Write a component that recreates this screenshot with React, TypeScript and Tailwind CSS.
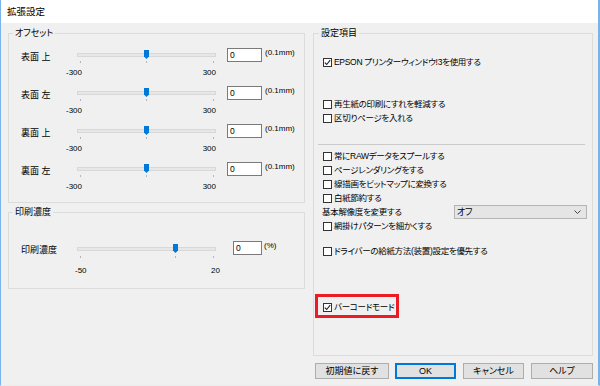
import type { ReactNode } from 'react'

const BOX = 'border border-[#dcdcdc]'

function Legend({ children, cls }: { children: ReactNode; cls: string }) {
  return <div className={`-mt-[7px] px-[2px] w-fit bg-[#f0f0f0] leading-[12px] text-[9px] ${cls}`}>{children}</div>
}

function Thumb({ left }: { left: number }) {
  return (
    <svg className="absolute top-0" style={{ left: left - 2 }} width="5" height="9" viewBox="0 0 5 9">
      <path d="M0 0H5V6.5L2.5 9L0 6.5Z" fill="#0078d7" />
    </svg>
  )
}

type SliderProps = {
  thumb: number
  ticks: number[]
  min: string
  max: string
  top: string
  tickTop: string
  labelRow: string
}

function Slider({ thumb, ticks, min, max, top, tickTop, labelRow }: SliderProps) {
  return (
    <div className="w-[139px] shrink-0">
      <div className={`relative h-[9px] flex items-center ${top}`}>
        <div className="w-full h-[4px] bg-[#e7e7e7] border border-[#d8d8d8]" />
        <Thumb left={thumb} />
      </div>
      <div className={`relative h-[2px] ${tickTop}`}>
        {ticks.map((t) => (
          <span key={t} className="absolute top-0 w-px h-[2px] bg-[#b5b5b5]" style={{ left: t }} />
        ))}
      </div>
      <div className={`flex justify-between text-[8px] leading-[10px] ${labelRow}`}>
        <span>{min}</span>
        <span>{max}</span>
      </div>
    </div>
  )
}

function OffsetRow({ label }: { label: string }) {
  return (
    <div className="h-[38px] flex items-start pl-[12px]">
      <div className="w-[56px] mt-[4px] leading-[12px] text-[9px]">{label}</div>
      <Slider thumb={69} ticks={[3, 69, 136]} min="-300" max="300" top="mt-[3px]" tickTop="mt-[2px]" labelRow="mt-[5px] -ml-[11px]" />
      <div className="ml-[11px] mt-[1px] w-[35px] h-[14px] border border-[#7a7a7a] bg-white pl-[2px] text-[8.5px] leading-[12px]">0</div>
      <div className="ml-[3px] mt-[1px] text-[8px] leading-[10px]">(0.1mm)</div>
    </div>
  )
}

function Box({ checked }: { checked?: boolean }) {
  return (
    <span className="w-[9px] h-[9px] shrink-0 border border-[#333] bg-white flex items-center justify-center">
      {checked && (
        <svg width="7" height="7" viewBox="0 0 7 7">
          <polyline points="0.8,3.6 2.7,5.5 6.2,1.2" fill="none" stroke="#222" strokeWidth="1.1" />
        </svg>
      )}
    </span>
  )
}

function Check({ label, checked, pad = 'pl-[9px]', cls = '' }: { label: string; checked?: boolean; pad?: string; cls?: string }) {
  return (
    <div className={`h-[14px] flex items-center gap-[2px] text-[8.5px] tracking-[-0.3px] leading-[12px] whitespace-nowrap ${pad} ${cls}`}>
      <Box checked={checked} />
      <span>{label}</span>
    </div>
  )
}

function Btn({ label, w, cls = '', primary }: { label: string; w: string; cls?: string; primary?: boolean }) {
  return (
    <div
      className={`${w} h-[16px] flex items-center justify-center bg-[#e1e1e1] text-[9px] leading-none ${
        primary ? 'border-2 border-[#0078d7]' : 'border border-[#adadad]'
      } ${cls}`}
    >
      {label}
    </div>
  )
}

export default function App() {
  return (
    <div className="w-[600px] h-[386px] flex flex-col overflow-hidden bg-[#f0f0f0] text-black border-l border-r-2 border-b border-l-[#7ab3ea] border-r-[#7ab3ea] border-b-[#ececec] font-['Liberation_Sans','Noto_Sans_CJK_JP',sans-serif] [font-feature-settings:'palt']">
      <div className="h-[23px] shrink-0 bg-white flex items-center pl-[6px] text-[9.5px] leading-none">拡張設定</div>

      <div className="flex gap-[8px] pl-[7px] pt-[10px]">
        {/* left column */}
        <div className="w-[297px] flex flex-col">
          <div className={`h-[170px] ${BOX}`}>
            <Legend cls="ml-[4px]">オフセット</Legend>
            <div className="mt-[8px]">
              <OffsetRow label="表面 上" />
              <OffsetRow label="表面 左" />
              <OffsetRow label="裏面 上" />
              <OffsetRow label="裏面 左" />
            </div>
          </div>

          <div className={`mt-[9px] h-[77px] ${BOX}`}>
            <Legend cls="ml-[4px]">印刷濃度</Legend>
            <div className="mt-[22px] flex items-start pl-[12px]">
              <div className="w-[56px] mt-[4px] leading-[12px] text-[9px]">印刷濃度</div>
              <Slider thumb={98} ticks={[3, 98, 136]} min="-50" max="20" top="mt-[4px]" tickTop="mt-[3px]" labelRow="mt-[8px] -ml-[2px] -mr-[4px]" />
              <div className="ml-[17px] mt-[1px] w-[29px] h-[14px] border border-[#7a7a7a] bg-white pl-[2px] text-[8.5px] leading-[12px]">0</div>
              <div className="ml-[2px] mt-[1px] text-[8px] leading-[10px]">(%)</div>
            </div>
          </div>
        </div>

        {/* right column */}
        <div className="w-[280px] flex flex-col">
          <div className={`h-[323px] ${BOX}`}>
            <Legend cls="ml-[5px]">設定項目</Legend>
            <Check cls="mt-[16px]" checked label="EPSON プリンターウィンドウ!3を使用する" />
            <Check cls="mt-[28px]" label="再生紙の印刷にすれを軽減する" />
            <Check label="区切りページを入れる" />
            <div className="mt-[19px] ml-[4px] mr-[7px] h-px bg-[#cacaca]" />
            <Check cls="mt-[4px]" label="常にRAWデータをスプールする" />
            <Check label="ページレンダリングをする" />
            <Check label="線描画をビットマップに変換する" />
            <Check label="白紙節約する" />
            <div className="h-[14px] flex items-center pl-[8px] text-[8.5px] tracking-[-0.3px] leading-[12px]">
              <span className="w-[132px]">基本解像度を変更する</span>
              <div className="w-[133px] h-[14px] bg-[#e5e5e5] border border-[#b4b4b4] flex items-center justify-between pl-[2px] pr-[5px]">
                <span className="text-[9px] leading-none">オフ</span>
                <svg width="7" height="4" viewBox="0 0 7 4">
                  <polyline points="0.5,0.5 3.5,3.5 6.5,0.5" fill="none" stroke="#444" strokeWidth="1" />
                </svg>
              </div>
            </div>
            <Check label="網掛けパターンを細かくする" />
            <Check cls="mt-[11px]" label="ドライバーの給紙方法(装置)設定を優先する" />
            <div className="mt-[36px] ml-[1px] w-[84px] h-[24px] border-[3px] border-[#ec1c24] pt-[3px]">
              <Check pad="pl-[5px]" checked label="バーコードモード" />
            </div>
          </div>

          <div className="mt-[7px] ml-[2px] flex">
            <Btn w="w-[74px]" label="初期値に戻す" />
            <Btn w="w-[61px]" cls="ml-[6px]" primary label="OK" />
            <Btn w="w-[61px]" cls="ml-[7px]" label="キャンセル" />
            <Btn w="w-[62px]" cls="ml-[7px]" label="ヘルプ" />
          </div>
        </div>
      </div>
    </div>
  )
}
